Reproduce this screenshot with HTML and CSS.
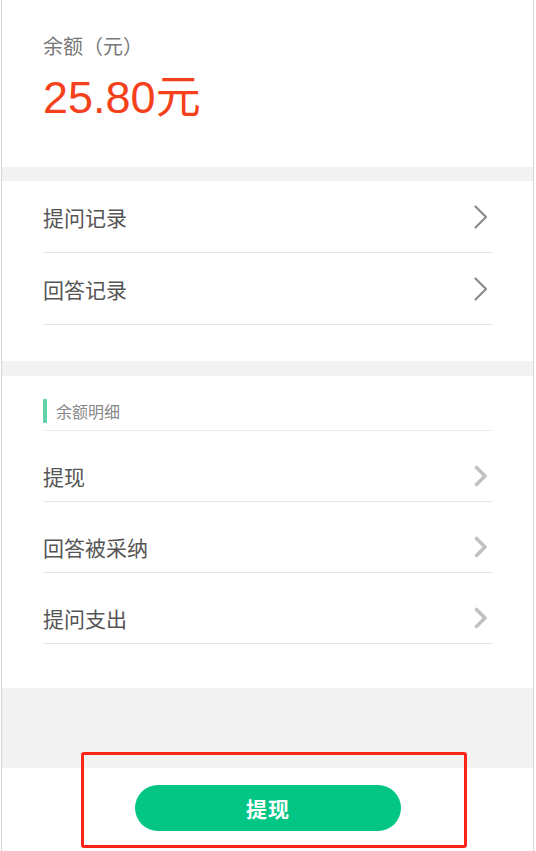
FILE: index.html
```html
<!DOCTYPE html>
<html lang="zh-CN">
<head>
<meta charset="utf-8">
<title>余额</title>
<link rel="stylesheet" href="styles.css">
</head>
<body>
<div class="page">
  <section class="balance">
    <div class="balance-label">余额（元）</div>
    <div class="balance-amount"><span class="num">25.80</span>元</div>
  </section>
  <div class="gap gap-sm"></div>
  <section class="list list-main">
    <div class="row">
      <span class="row-text">提问记录</span>
      <svg class="chev chev-thin" viewBox="0 0 14 24" width="14" height="24"><path d="M1.5 1.5 L12 12 L1.5 22.5" fill="none" stroke="#8a8a8a" stroke-width="2.2" stroke-linecap="round" stroke-linejoin="round"/></svg>
    </div>
    <div class="row">
      <span class="row-text">回答记录</span>
      <svg class="chev chev-thin" viewBox="0 0 14 24" width="14" height="24"><path d="M1.5 1.5 L12 12 L1.5 22.5" fill="none" stroke="#8a8a8a" stroke-width="2.2" stroke-linecap="round" stroke-linejoin="round"/></svg>
    </div>
  </section>
  <div class="gap gap-sm gap-mid"></div>
  <section class="list list-detail">
    <div class="detail-head"><span class="head-bar"></span><span class="head-text">余额明细</span></div>
    <div class="row row-detail">
      <span class="row-text">提现</span>
      <svg class="chev chev-bold" viewBox="0 0 14 22" width="14" height="22"><path d="M2.5 2.5 L11 11 L2.5 19.5" fill="none" stroke="#c2c2c2" stroke-width="3.6" stroke-linecap="round" stroke-linejoin="round"/></svg>
    </div>
    <div class="row row-detail">
      <span class="row-text">回答被采纳</span>
      <svg class="chev chev-bold" viewBox="0 0 14 22" width="14" height="22"><path d="M2.5 2.5 L11 11 L2.5 19.5" fill="none" stroke="#c2c2c2" stroke-width="3.6" stroke-linecap="round" stroke-linejoin="round"/></svg>
    </div>
    <div class="row row-detail">
      <span class="row-text">提问支出</span>
      <svg class="chev chev-bold" viewBox="0 0 14 22" width="14" height="22"><path d="M2.5 2.5 L11 11 L2.5 19.5" fill="none" stroke="#c2c2c2" stroke-width="3.6" stroke-linecap="round" stroke-linejoin="round"/></svg>
    </div>
  </section>
  <div class="gap gap-lg"></div>
  <section class="footer">
    <button class="withdraw">提现</button>
  </section>
  <div class="highlight"></div>
</div>
</body>
</html>
```
FILE: styles.css
```css
html, body {
  margin: 0;
  padding: 0;
  background: #ffffff;
}
body {
  font-family: "Noto Sans CJK SC", "Noto Sans", sans-serif;
}
.page {
  position: relative;
  margin-left: 1px;
  width: 531px;
  min-height: 851px;
  border-left: 1px solid #d6d6d6;
  border-right: 1px solid #d6d6d6;
  background: #ffffff;
  box-sizing: content-box;
}
.balance {
  height: 167px;
  padding: 32px 0 0 41px;
  box-sizing: border-box;
}
.balance-label {
  font-size: 20px;
  line-height: 27px;
  color: #777777;
}
.balance-amount {
  margin-top: 9px;
  font-size: 45px;
  line-height: 52px;
  color: #f5401c;
}
.balance-amount .num {
  font-family: "Liberation Sans", "Noto Sans", sans-serif;
}
.gap {
  background: #f2f2f2;
}
.gap-sm {
  height: 14px;
}
.gap-mid {
  height: 15px;
}
.gap-lg {
  height: 80px;
}
.list {
  padding: 0 40px 0 41px;
}
.list-main {
  padding-bottom: 36px;
}
.list-detail {
  padding-bottom: 44px;
}
.row {
  display: flex;
  align-items: center;
  justify-content: space-between;
  height: 72px;
  padding-right: 5px;
  border-bottom: 1px solid #e6e6e6;
  box-sizing: border-box;
}
.row-text {
  font-size: 21px;
  color: #555555;
  line-height: 28px;
}
.row-detail {
  height: 71px;
  align-items: flex-end;
  padding-bottom: 11px;
}
.row-detail .chev {
  margin-bottom: 3px;
}
.detail-head {
  display: flex;
  align-items: center;
  height: 55px;
  padding-top: 23px;
  padding-bottom: 8px;
  box-sizing: border-box;
  border-bottom: 1px solid #ececec;
}
.head-bar {
  width: 4px;
  height: 24px;
  background: #62d3a9;
  border-radius: 1px;
  margin-right: 9px;
}
.head-text {
  font-size: 16px;
  color: #888888;
  line-height: 24px;
}
.footer {
  display: flex;
  justify-content: center;
  padding-top: 17px;
  padding-right: 1px;
}
.withdraw {
  width: 266px;
  height: 46px;
  border: none;
  border-radius: 23px;
  background: #03c584;
  color: #ffffff;
  font-family: "Noto Sans CJK SC", sans-serif;
  font-size: 21px;
  font-weight: 700;
  letter-spacing: 1px;
  margin-left: 2px;
}
.highlight {
  position: absolute;
  left: 79px;
  top: 752px;
  width: 386px;
  height: 96px;
  border: 3px solid #ff2418;
  border-radius: 3px;
  box-sizing: border-box;
  pointer-events: none;
}
```
